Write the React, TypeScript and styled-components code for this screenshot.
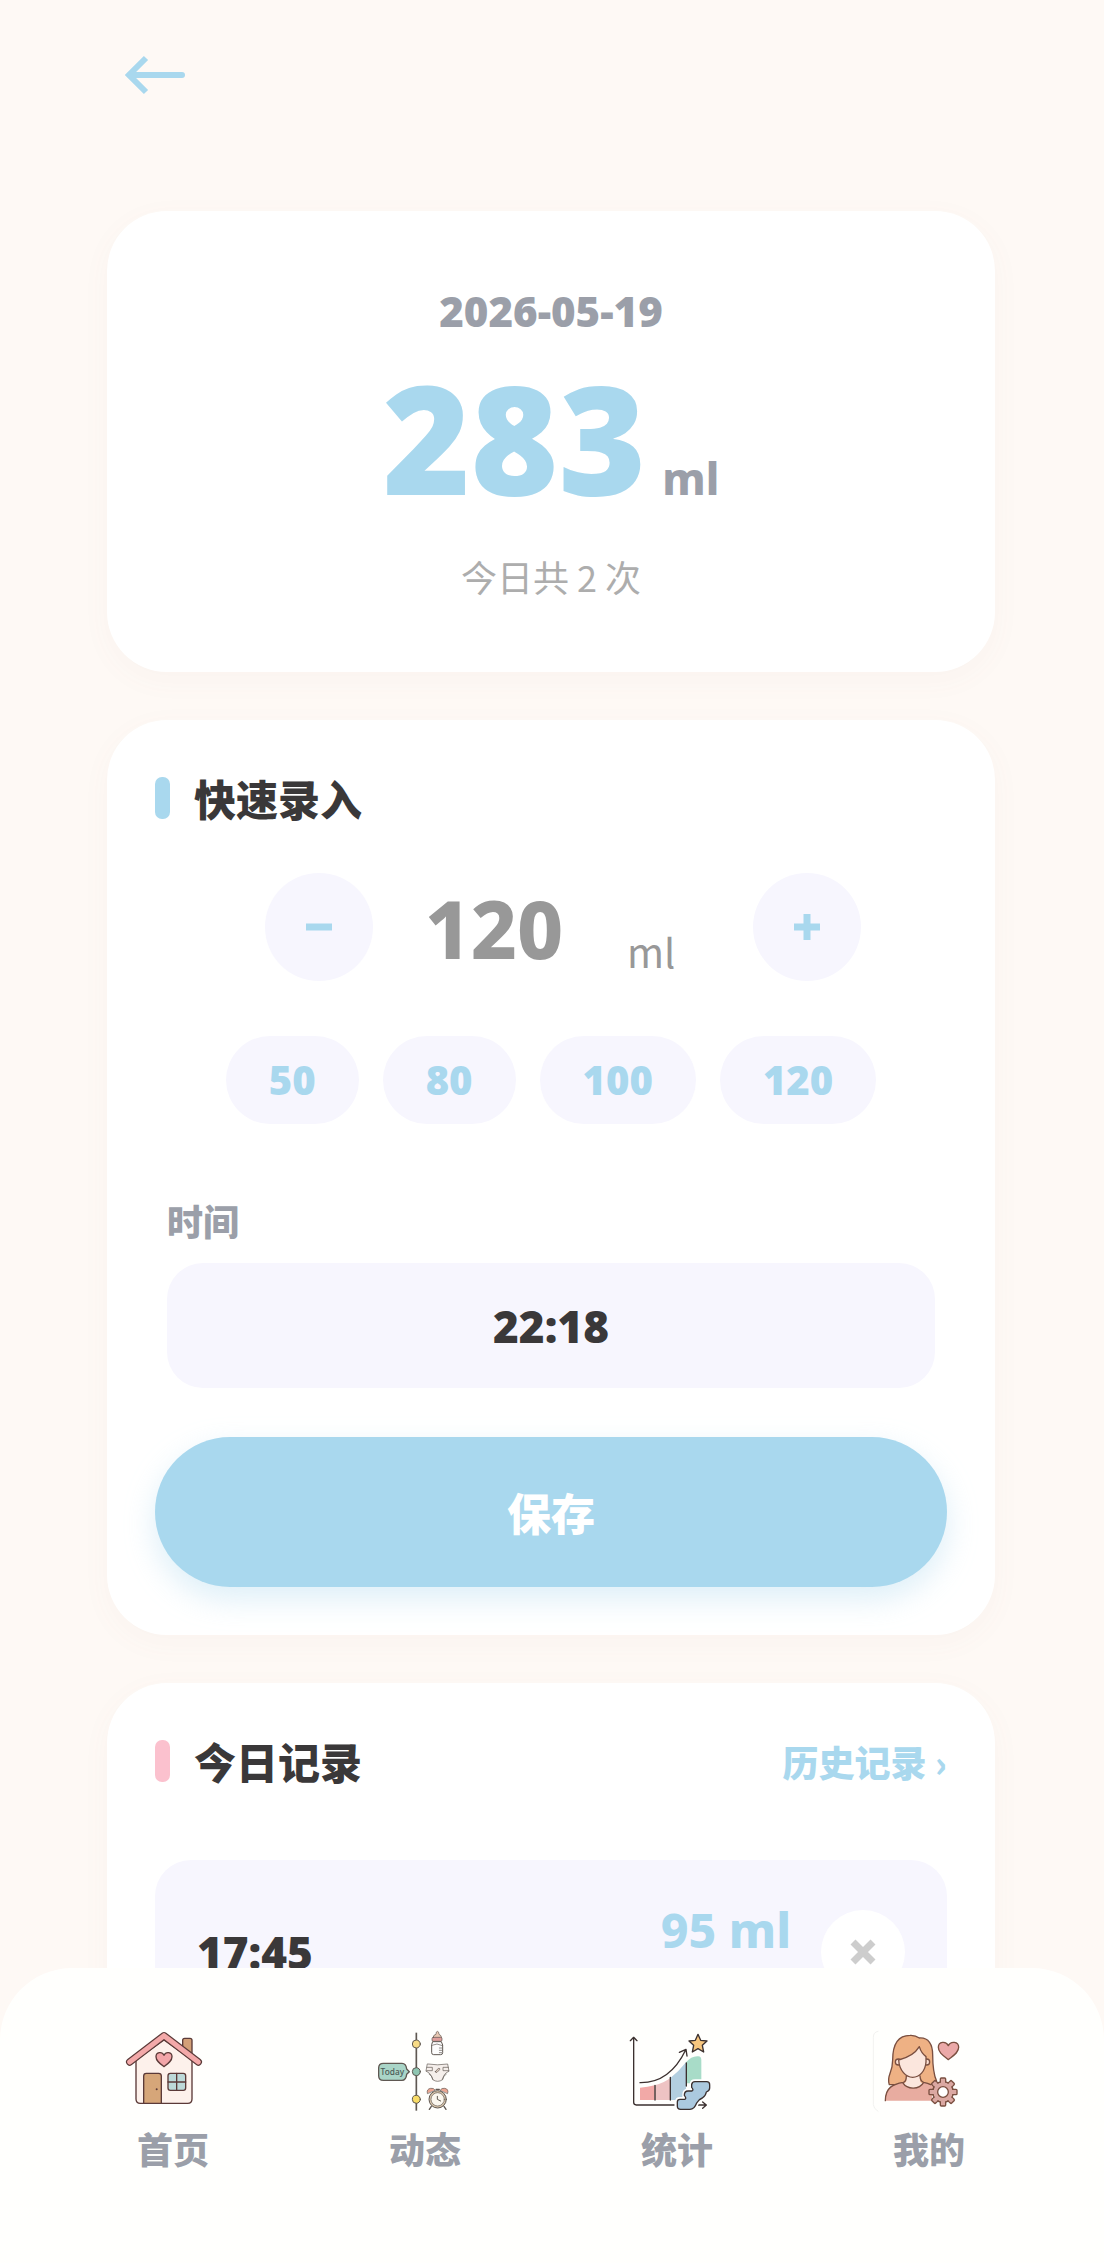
import React, { useState } from "react";
import styled, { createGlobalStyle } from "styled-components";

const color = {
  page: "#fef9f5",
  card: "#ffffff",
  soft: "#f7f6fe",
  blue: "#a9d8ee",
  pink: "#fbc1ce",
  ink: "#3a3839",
  slate: "#9b9fa9",
  grey: "#989898",
  mist: "#adadad",
};

const hanFont = `"Noto Sans CJK SC", sans-serif`;

const GlobalStyle = createGlobalStyle`
  *, *::before, *::after { box-sizing: border-box; }
  body {
    margin: 0;
    background: ${color.page};
    color: ${color.ink};
    font-family: "Noto Sans", "Noto Sans CJK SC", sans-serif;
  }
  button, input { font: inherit; color: inherit; border: 0; padding: 0; margin: 0; }
  button { cursor: pointer; }
  h2, p, ul { margin: 0; padding: 0; }
`;

const Shell = styled.div`
  height: 100vh;
  display: flex;
  flex-direction: column;
  overflow: hidden;
`;

const Header = styled.header`
  flex: none;
  height: 111px;
  padding: 51px 125px 0;
`;

const BackButton = styled.button`
  display: block;
  width: 60px;
  height: 48px;
  background: none;
  svg { display: block; }
`;

const Content = styled.main`
  flex: 1;
  min-height: 0;
  display: flex;
  flex-direction: column;
  gap: 48px;
  padding: 100px 109px 320px 107px;
  overflow-y: auto;
  scrollbar-width: none;
`;

const Card = styled.section`
  flex: none;
  padding: 48px;
  border-radius: 60px;
  background: ${color.card};
  box-shadow: 0 8px 30px rgba(150, 110, 90, 0.04);
`;

const SummaryCard = styled(Card)`
  display: flex;
  flex-direction: column;
  align-items: center;
  padding: 72px 48px;
`;

const DateText = styled.time`
  font-size: 42px;
  line-height: 56px;
  font-weight: 900;
  color: ${color.slate};
`;

const Total = styled.p`
  display: flex;
  align-items: baseline;
  gap: 16px;
  margin: 22px 0 39px;
  line-height: 152px;
  color: ${color.blue};
  font-size: 150px;
  font-weight: 900;
`;

const TotalUnit = styled.span`
  font-size: 44px;
  line-height: 48px;
  font-weight: 800;
  color: ${color.slate};
`;

const Count = styled.p`
  font-family: ${hanFont};
  font-size: 36px;
  line-height: 48px;
  color: ${color.mist};
`;

const CardHead = styled.div`
  display: flex;
  align-items: center;
  justify-content: space-between;
  height: 60px;
`;

const Title = styled.h2<{ $accent: string }>`
  display: flex;
  align-items: center;
  gap: 24px;
  font-family: ${hanFont};
  font-size: 42px;
  line-height: 56px;
  font-weight: 900;
  &::before {
    content: "";
    width: 15px;
    height: 42px;
    border-radius: 7px;
    background: ${(p) => p.$accent};
  }
`;

const Stepper = styled.div`
  display: flex;
  align-items: center;
  justify-content: center;
  gap: 48px;
  margin-top: 45px;
  padding-left: 24px;
`;

const RoundButton = styled.button<{ $size: number; $bg: string }>`
  flex: none;
  display: grid;
  place-items: center;
  width: ${(p) => p.$size}px;
  height: ${(p) => p.$size}px;
  border-radius: 50%;
  background: ${(p) => p.$bg};
`;

const AmountInput = styled.input`
  width: 146px;
  height: 108px;
  background: none;
  text-align: center;
  font-size: 80px;
  font-weight: 800;
  color: ${color.grey};
  outline: none;
`;

const AmountUnit = styled.label`
  align-self: flex-end;
  width: 78px;
  margin-left: 12px;
  font-family: ${hanFont};
  font-size: 40px;
  line-height: 60px;
  color: ${color.grey};
`;

const Presets = styled.div`
  display: flex;
  justify-content: center;
  gap: 24px;
  margin-top: 55px;
`;

const Preset = styled.button`
  height: 88px;
  padding: 0 43px;
  border-radius: 44px;
  background: ${color.soft};
  color: ${color.blue};
  font-size: 40px;
  line-height: 88px;
  font-weight: 900;
`;

const Field = styled.div`
  display: flex;
  flex-direction: column;
  gap: 19px;
  margin: 72px 12px 49px;
`;

const FieldLabel = styled.label`
  font-family: ${hanFont};
  font-size: 36px;
  line-height: 48px;
  font-weight: 900;
  color: ${color.slate};
`;

const TimeInput = styled.input`
  width: 100%;
  height: 125px;
  border-radius: 36px;
  background: ${color.soft};
  text-align: center;
  font-size: 44px;
  font-weight: 900;
  outline: none;
`;

const SaveButton = styled.button`
  display: block;
  width: 100%;
  height: 150px;
  border-radius: 75px;
  background: ${color.blue};
  box-shadow: 0 12px 30px rgba(169, 216, 238, 0.4);
  color: #fff;
  font-family: ${hanFont};
  font-size: 44px;
  font-weight: 900;
`;

const HistoryLink = styled.a`
  font-family: ${hanFont};
  font-size: 36px;
  line-height: 56px;
  font-weight: 900;
  color: ${color.blue};
  text-decoration: none;
`;

const Records = styled.ul`
  margin-top: 69px;
  list-style: none;
`;

const Record = styled.li`
  display: flex;
  align-items: center;
  height: 184px;
  padding: 0 42px;
  border-radius: 36px;
  background: ${color.soft};
`;

const RecordTime = styled.time`
  flex: 1;
  font-size: 44px;
  line-height: 60px;
  font-weight: 900;
`;

const RecordAmount = styled.span`
  align-self: flex-start;
  margin: 38px 30px 0 0;
  font-size: 48px;
  line-height: 64px;
  font-weight: 800;
  color: ${color.blue};
`;

const TabBar = styled.nav`
  position: fixed;
  left: 0;
  right: 0;
  bottom: 0;
  display: grid;
  grid-template-columns: repeat(4, 1fr);
  padding: 60px 49px 91px 47px;
  border-radius: 72px 72px 0 0;
  background: #fffffd;
`;

const Tab = styled.a`
  display: flex;
  flex-direction: column;
  align-items: center;
  gap: 12px;
  font-family: ${hanFont};
  font-size: 36px;
  line-height: 48px;
  font-weight: 900;
  color: ${color.slate};
  text-decoration: none;
`;

const TabIcon = styled.svg`
  width: 84px;
  height: 84px;
  margin-right: 24px;
  overflow: visible;
`;

const Glyph = ({ d, stroke }: { d: string; stroke: string }) => (
  <svg width="26" height="26" viewBox="0 0 26 26" aria-hidden="true">
    <path d={d} stroke={stroke} strokeWidth="7" fill="none" />
  </svg>
);

const HomeIcon = () => (
  <TabIcon viewBox="87 84 252 252" aria-hidden="true" stroke="#5b3a38" strokeWidth="4" strokeLinejoin="round" strokeLinecap="round">
    <rect x="278" y="115" width="28" height="52" rx="6" fill="#d3a078" />
    <path d="M138 180V297Q138 310 151 310H293Q306 310 306 297V180L222 120Z" fill="#fdf1eb" />
    <path d="M119 186L222 107L325 186" fill="none" strokeWidth="22" />
    <path d="M119 186L222 107L325 186" fill="none" stroke="#f3a9a9" strokeWidth="15" />
    <path d="M222 200C209 190 198 182 198 170C198 156 216 153 222 166C228 153 246 156 246 170C246 182 235 190 222 200Z" fill="#f2a5a8" />
    <path d="M161 310V228Q161 220 169 220H206Q214 220 214 228V310Z" fill="#d6a679" />
    <circle cx="200" cy="268" r="3" fill="#5b3a38" stroke="none" />
    <rect x="234" y="220" width="53" height="51" rx="7" fill="#bdd9d8" />
    <path d="M260 220V271M234 246H287" fill="none" />
  </TabIcon>
);

const TimelineIcon = () => (
  <TabIcon viewBox="33 84 252 252" aria-hidden="true" stroke="#5f5852" strokeWidth="3" strokeLinejoin="round" strokeLinecap="round">
    <path d="M169 98V332" strokeWidth="5" strokeLinecap="butt" />
    <circle cx="169" cy="132" r="12" fill="#f8dc86" />
    <circle cx="169" cy="215" r="12" fill="#8fc6b2" />
    <circle cx="169" cy="298" r="12" fill="#f8dc66" />
    <path d="M70 190H126Q138 190 140 207L148 215L140 223Q138 241 126 241H70Q56 241 56 227V204Q56 190 70 190Z" fill="#a9d5c7" strokeWidth="4" />
    <text x="97" y="224" textAnchor="middle" fontSize="25" fontFamily="Noto Sans, sans-serif" fontWeight="500" fill="#4c5b56" stroke="none">Today</text>

    <path d="M219 113Q220 104 228 103Q228 94 232 94Q237 94 237 103Q244 105 245 113Z" fill="#eac9b4" strokeWidth="2" />
    <rect x="216" y="112" width="30" height="12" rx="4" fill="#df9f9c" strokeWidth="2" />
    <path d="M219 125H244L248 135V158Q248 164 242 164H221Q215 164 215 158V135Z" fill="#fdfdfd" />
    <path d="M216 136L231 132L247 137M238 144H245M238 151H245M238 158H245" fill="none" strokeWidth="2" />

    <path d="M203 192Q233 197 263 192L267 214Q251 219 248 239Q233 249 218 239Q214 219 199 214Z" fill="#f5efeb" strokeWidth="2" />
    <path d="M201 202H217V212H200M265 202H249V212H266M207 222Q215 226 219 238M259 222Q251 226 247 238" fill="none" strokeWidth="2" />
    <path d="M226 215L235 205Q241 204 239 209L231 217Q226 219 226 215Z" fill="#dfcbbd" strokeWidth="2" />

    <path d="M202 280Q199 267 212 265Q221 263 225 270ZM263 280Q267 267 254 265Q245 263 241 270Z" fill="#eda692" strokeWidth="2" />
    <path d="M214 319L208 328M252 319L258 328M228 268H238" strokeWidth="4" />
    <circle cx="233" cy="298" r="26" fill="#d9c6ab" />
    <circle cx="233" cy="298" r="20" fill="#fbf7ee" strokeWidth="2" />
    <path d="M232 289V298L242 303" fill="none" />
  </TabIcon>
);

const ChartIcon = () => (
  <TabIcon viewBox="39 84 252 252" aria-hidden="true" stroke="#3b302f" strokeWidth="4" strokeLinejoin="round" strokeLinecap="round" fill="none">
    <path d="M90 263Q113 262 134 256V300H90Z" fill="#f2a9a7" stroke="none" />
    <path d="M134 256Q160 250 181 234V300H134Z" fill="#eec3c3" stroke="none" />
    <path d="M181 234Q207 214 228 187V300H181Z" fill="#b3cfe0" stroke="none" />
    <path d="M228 187Q245 167 265 169Q274 170 274 180V250H228Z" fill="#a8dcc8" stroke="none" />
    <path d="M135 256V300M181 232V300M229 189V258" />
    <path d="M71 112V307Q71 315 79 315H192M61 122L71 112L81 122" />
    <path d="M90 248C150 249 196 214 227 150M208 157L228 148L231 168" />
    <path d="M264 103L272 121L291 123L277 136L281 156L264 146L247 156L251 136L237 123L256 121Z" fill="#f7c67e" />
    <path d="M264 315H288M278 306L289 315L278 325" />
    <path
      d="M210 298H224V283Q224 273 234 273H246V254Q246 245 255 245H290Q299 245 299 254V264Q299 272 289 276Q287 288 277 294Q266 298 260 309Q253 328 240 328H212Q202 328 202 319V306Q202 298 210 298Z"
      stroke="#fff"
      strokeWidth="14"
    />
    <path
      d="M210 298H224Q231 296 223 286Q223 273 234 273H246Q252 270 245 262V254Q246 245 255 245H290Q299 245 299 254V264Q299 272 289 276Q287 288 277 294Q266 298 260 309Q253 328 240 328H212Q202 328 202 319V306Q202 298 210 298Z"
      fill="#abc9df"
    />
  </TabIcon>
);

const teeth = [0, 45, 90, 135, 180, 225, 270, 315];

const ProfileIcon = () => (
  <TabIcon viewBox="45 84 252 252" aria-hidden="true" stroke="#7a4f40" strokeWidth="4" strokeLinejoin="round" strokeLinecap="round" fill="none">
    <path d="M54 94Q40 96 40 112V314Q41 326 54 334" stroke="#f2f2f0" strokeWidth="3" />
    <path d="M88 254C78 226 98 222 98 180C98 132 116 106 150 106Q166 105 178 114C206 112 218 134 218 164C218 206 222 226 230 244Q222 254 208 254Z" fill="#eeb184" />
    <path d="M139 228V242Q139 249 124 252L160 268L196 252Q180 249 180 242V228Z" fill="#fbe6dd" stroke="none" />
    <path d="M76 302C76 262 100 252 128 248C142 270 178 270 191 247Q212 250 222 262L214 302Z" fill="#e8aca0" stroke="none" />
    <path d="M76 302C76 262 100 252 130 247Q139 245 139 228M180 228Q181 244 191 247Q204 249 212 254M128 248C142 270 178 270 191 247" />
    <circle cx="115" cy="186" r="9" fill="#fbe0d4" />
    <circle cx="200" cy="186" r="9" fill="#fbe0d4" />
    <path d="M116 180C140 174 166 160 178 140Q184 160 198 170V186C196 214 178 232 158 232C138 232 118 212 116 180Z" fill="#fbe6dd" />
    <path d="M265 179C250 167 235 158 235 142C235 124 258 122 265 137C272 122 296 124 296 142C296 158 280 167 265 179Z" fill="#eba9a8" />
    <g transform="translate(249 276)">
      {teeth.map((a) => (
        <rect key={a} x="-8" y="-42" width="16" height="20" rx="3" fill="#dba8a2" transform={`rotate(${a})`} />
      ))}
      <circle r="31" fill="#dba8a2" />
      {teeth.map((a) => (
        <rect key={a} x="-6" y="-35" width="12" height="12" fill="#dba8a2" stroke="none" transform={`rotate(${a})`} />
      ))}
      <circle r="16" fill="#fff" />
    </g>
  </TabIcon>
);

const tabs = [
  { label: "首页", Icon: HomeIcon },
  { label: "动态", Icon: TimelineIcon },
  { label: "统计", Icon: ChartIcon },
  { label: "我的", Icon: ProfileIcon },
];

const presets = [50, 80, 100, 120];

export default function App() {
  const [amount, setAmount] = useState(120);
  const [time, setTime] = useState("22:18");

  return (
    <>
      <GlobalStyle />
      <Shell>
        <Header>
          <BackButton type="button" aria-label="返回">
            <svg width="60" height="48" viewBox="0 0 60 48" fill="none" stroke={color.blue} aria-hidden="true">
              <path d="M21 7L4 24L21 41" strokeWidth="6" />
              <path d="M5 24H57" strokeWidth="6" strokeLinecap="round" />
            </svg>
          </BackButton>
        </Header>

        <Content>
          <SummaryCard>
            <DateText dateTime="2026-05-19">2026-05-19</DateText>
            <Total>
              283<TotalUnit>ml</TotalUnit>
            </Total>
            <Count>今日共 2 次</Count>
          </SummaryCard>

          <Card>
            <CardHead>
              <Title $accent={color.blue}>快速录入</Title>
            </CardHead>
            <Stepper>
              <RoundButton type="button" $size={108} $bg={color.soft} aria-label="减少" onClick={() => setAmount(Math.max(0, amount - 10))}>
                <Glyph d="M0 13H26" stroke={color.blue} />
              </RoundButton>
              <AmountInput
                id="amount"
                inputMode="numeric"
                value={amount}
                onChange={(e) => setAmount(Number(e.target.value) || 0)}
              />
              <AmountUnit htmlFor="amount">ml</AmountUnit>
              <RoundButton type="button" $size={108} $bg={color.soft} aria-label="增加" onClick={() => setAmount(amount + 10)}>
                <Glyph d="M0 13H26M13 0V26" stroke={color.blue} />
              </RoundButton>
            </Stepper>
            <Presets>
              {presets.map((n) => (
                <Preset key={n} type="button" onClick={() => setAmount(n)}>
                  {n}
                </Preset>
              ))}
            </Presets>
            <Field>
              <FieldLabel htmlFor="time">时间</FieldLabel>
              <TimeInput id="time" value={time} onChange={(e) => setTime(e.target.value)} />
            </Field>
            <SaveButton type="button">保存</SaveButton>
          </Card>

          <Card>
            <CardHead>
              <Title $accent={color.pink}>今日记录</Title>
              <HistoryLink href="#history">历史记录 ›</HistoryLink>
            </CardHead>
            <Records>
              <Record>
                <RecordTime dateTime="17:45">17:45</RecordTime>
                <RecordAmount>95 ml</RecordAmount>
                <RoundButton type="button" $size={84} $bg={color.card} aria-label="删除">
                  <Glyph d="M3 3L23 23M23 3L3 23" stroke="#cdcdcd" />
                </RoundButton>
              </Record>
            </Records>
          </Card>
        </Content>

        <TabBar>
          {tabs.map(({ label, Icon }) => (
            <Tab key={label} href="#">
              <Icon />
              {label}
            </Tab>
          ))}
        </TabBar>
      </Shell>
    </>
  );
}
